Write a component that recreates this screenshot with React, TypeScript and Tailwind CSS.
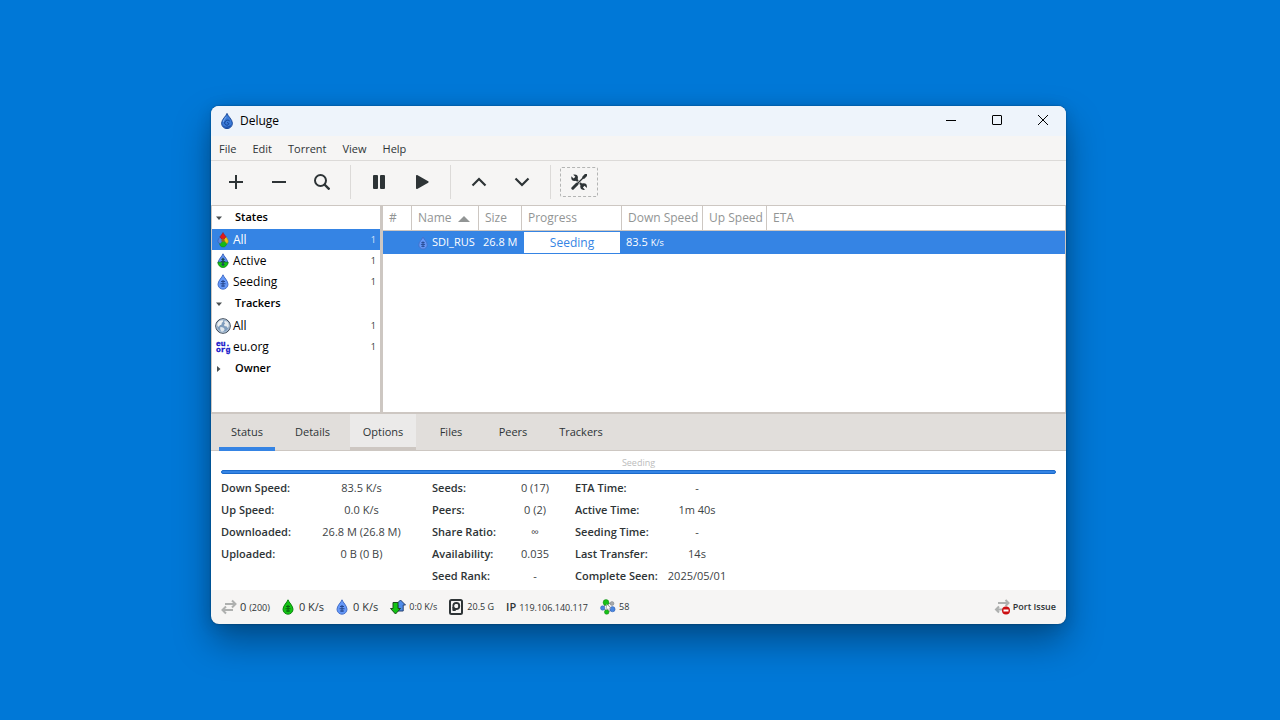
import React, { useState } from "react";

type IconProps = { className?: string };

const LogoIcon = ({ className }: IconProps) => (
  <svg viewBox="0 0 12 16" className={className} aria-hidden="true">
    <path d="M6 .4C5.300 2.900.6 6.500.6 10.200a5.400 5.400 0 0 0 10.800 0C11.400 6.500 6.700 2.900 6 .4Z" fill="#3b7bd8" stroke="#0f3f94" strokeWidth=".9" />
    <path d="M1.300 11.500c1.200 2.200 4.500 3.400 9 .3-.8 2-2.400 3.200-4.300 3.200s-3.900-1.200-4.700-3.500Z" fill="#1d4fa8" />
    <path d="M8.800 8.200C7.300 6.200 3.800 7.200 3.700 9.900c0 2.300 3 3 3.900 1.300.5-1.100-.7-2-1.600-1.300" fill="none" stroke="#123f8e" strokeWidth="1" />
    <path d="M5.300 3.800C4 5.500 2.500 7.300 2.200 9" fill="none" stroke="#8db9f5" strokeWidth=".8" />
  </svg>
);

const BlueDrop = ({ className }: IconProps) => (
  <svg viewBox="0 0 12 16" className={className} aria-hidden="true">
    <path d="M6 .8C5.300 3.300 1 6.600 1 10.200a5 5 0 0 0 10 0C11 6.600 6.700 3.300 6 .8Z" fill="#6598f8" stroke="#4670c8" strokeWidth="1" />
    <path d="M6 6v7M4 7.500h4M3.500 9.700h5M4 12h4" fill="none" stroke="#26488f" strokeWidth="1.100" />
  </svg>
);

const GreenDrop = ({ className }: IconProps) => (
  <svg viewBox="0 0 12 16" className={className} aria-hidden="true">
    <path d="M6 .8C5.300 3.300 1 6.600 1 10.200a5 5 0 0 0 10 0C11 6.600 6.700 3.300 6 .8Z" fill="#14c414" stroke="#0b850f" strokeWidth="1" />
    <path d="M6 6v7M4 7.500h4M3.500 9.700h5M4 12h4" fill="none" stroke="#0b6211" strokeWidth="1.100" />
  </svg>
);

const ActiveDrop = ({ className }: IconProps) => (
  <svg viewBox="0 0 12 16" className={className} aria-hidden="true">
    <path d="M6 .8C5.300 3.300 1 6.600 1 10.200h10C11 6.600 6.700 3.300 6 .8Z" fill="#5c8ff0" stroke="#4268bd" strokeWidth="1" />
    <path d="M.9 9.200a5.100 5.300 0 1 0 10.200 0Z" fill="#12c412" stroke="#0c8410" strokeWidth=".8" />
    <path d="M6 4.500 8 7H6.800v1h1.400v1H6.800v2H8l-2 2.300L4 11h1.200V9H3.800V8h1.400V7H4Z" fill="#1c4a55" />
  </svg>
);

const AllStatesIcon = ({ className }: IconProps) => (
  <svg viewBox="0 0 12 16" className={className} aria-hidden="true">
    <path d="M2.500 10.500 6 8l4 2.500c0 2.700-1.800 4.500-4 4.500s-3.800-2-3.500-4.500Z" fill="#15b915" stroke="#0c8410" strokeWidth=".5" />
    <path d="M.9 9c.2-1.500 1.200-3 2.200-4.200L6 8l-2.500 3.500C1.800 11.500.9 10.500.9 9Z" fill="#5a86e0" stroke="#36549d" strokeWidth=".5" />
    <path d="M8.700 4.800c1.500 1.400 2.500 3 2.500 4.400 0 1-.4 1.900-1.200 2.500L6.500 8Z" fill="#f1c40f" stroke="#9a8412" strokeWidth=".5" />
    <path d="M6 .5C5.500 1.800 4 3.300 3 4.700L4.500 7 6 8l2-2 1-1.300C8 3.300 6.500 1.800 6 .5Z" fill="#e01b1b" stroke="#a31313" strokeWidth=".5" />
    <path d="M4 8 6 6.500 8 8 6 10.500Z" fill="#8d6a1f" />
  </svg>
);

const GlobeIcon = ({ className }: IconProps) => (
  <svg viewBox="0 0 16 16" className={className} aria-hidden="true">
    <circle cx="8" cy="8" r="7.300" fill="#7f9dbd" stroke="#3c4654" strokeWidth="1" />
    <circle cx="8" cy="8" r="6.300" fill="none" stroke="#c9d8e6" strokeWidth=".8" />
    <path d="M3 4.500C4.500 2.500 7 2 8 2.500c.8.700-.3 1.600-1 2.100-.8.500.2 1.300-.5 2-.9.700-1.800.4-2.200 1.500-.2 1-1.200.8-1.600.2C2 7 2.300 5.600 3 4.500Z" fill="#f1f3f3" />
    <path d="M9.500 3.200c1.500-.4 3.200.8 4 2.600.5 1.600.3 2.900-.4 3.700-.8.700-1.300-.5-1.500-1.300-.9-.2-2.200.3-2.500-1-.2-1 .6-1.400 1.200-1.800-.8-.4-1.500-1.700-.8-2.200Z" fill="#e8ecef" />
    <path d="M5.500 9c1.600-.2 3.500.8 4 1.900.2 1.200-1.200 2.600-2.500 2.900C5.600 13.600 4.600 10.200 5.500 9Z" fill="#dfe6ec" />
  </svg>
);

const EuOrgIcon = ({ className }: IconProps) => (
  <svg viewBox="0 0 16 16" className={className} aria-hidden="true">
    <g fill="#1010c8" stroke="#1010c8" strokeWidth=".3" fontFamily="Liberation Mono, monospace" fontWeight="700" fontSize="8">
      <text x="1" y="7">eu.</text>
      <text x="1" y="13">org</text>
    </g>
  </svg>
);

const ArrowsIcon = ({ className }: IconProps) => (
  <svg viewBox="0 0 16 16" className={className} fill="none" stroke="#aeb0af" strokeWidth="2" aria-hidden="true">
    <path d="M4 5h10M11 1.500 14.500 5 11 8.500M12 11H2M5 7.500 1.500 11 5 14.500" />
  </svg>
);

const TrafficIcon = ({ className }: IconProps) => (
  <svg viewBox="0 0 16 16" className={className} strokeWidth="1" aria-hidden="true">
    <path d="M10.500 1 15.500 6h-2.300v6H7.800V6H5.500Z" fill="#4f8be8" stroke="#26406f" />
    <path d="M3 3.500h5v6h2.500L5.500 15 .5 9.500H3Z" fill="#13c413" stroke="#1a4d1c" />
  </svg>
);

const DiskIcon = ({ className }: IconProps) => (
  <svg viewBox="0 0 14 16" className={className} aria-hidden="true">
    <rect x="1" y="1" width="12" height="14" rx="1.500" fill="#f6f5f4" stroke="#2e3436" strokeWidth="2" />
    <circle cx="7.300" cy="7" r="2.900" fill="none" stroke="#2e3436" strokeWidth="2" />
    <path d="M3.900 8v3.500h2.500V9.500" fill="#2e3436" stroke="#2e3436" strokeWidth="1" />
    <circle cx="7.300" cy="7" r="1.900" fill="#f6f5f4" />
  </svg>
);

const PeersIcon = ({ className }: IconProps) => (
  <svg viewBox="0 0 16 16" className={className} aria-hidden="true">
    <path d="M6 3.500 12 5M3 9l5 4 5-3M6 4l2 9M3 9l3-5 6 6" stroke="#8a8f94" strokeWidth="1" fill="none" />
    <circle cx="6" cy="3.500" r="2.900" fill="#17c217" stroke="#118014" strokeWidth=".5" />
    <circle cx="12" cy="4.500" r="1.900" fill="#a8abad" stroke="#777b7e" strokeWidth=".5" />
    <circle cx="2.700" cy="9" r="2.200" fill="#4a86e0" stroke="#2f5fae" strokeWidth=".5" />
    <circle cx="12.500" cy="10.200" r="2.600" fill="#4a86e0" stroke="#2f5fae" strokeWidth=".5" />
    <circle cx="6.700" cy="13" r="2.300" fill="#17c217" stroke="#118014" strokeWidth=".5" />
    <path d="M6.500 5v6l1.500-1.300 1 2 1-.5-1-2h2Z" fill="#fff" stroke="#888" strokeWidth=".4" />
  </svg>
);

const PortIssueIcon = ({ className }: IconProps) => (
  <svg viewBox="0 0 16 16" className={className} aria-hidden="true">
    <path d="M4 4h10M11.500 1 14.500 4l-3 3M9 10.500H2M5 7.500l-3 3 3 3" fill="none" stroke="#aeb0af" strokeWidth="2" />
    <circle cx="12" cy="11.500" r="4" fill="#cc0f12" />
    <rect x="9.500" y="10.500" width="5" height="2" fill="#fff" />
  </svg>
);

const toolIcons = {
  add: <path d="M8 1v14M1 8h14" stroke="currentColor" strokeWidth="2" />,
  remove: <path d="M1 8h14" stroke="currentColor" strokeWidth="2" />,
  search: (
    <g fill="none" stroke="currentColor" strokeWidth="2">
      <circle cx="6.500" cy="6.500" r="5.500" />
      <path d="m10.500 10.500 5 5" strokeWidth="2.400" />
    </g>
  ),
  pause: (
    <g fill="currentColor">
      <rect x="2" y="1" width="5" height="14" rx="1" />
      <rect x="9" y="1" width="5" height="14" rx="1" />
    </g>
  ),
  play: <path d="M2 1.800v12.400c0 .7.600 1 1.200.7l11-6.200c.6-.3.600-1.100 0-1.400l-11-6.200C2.600.8 2 1.100 2 1.800Z" fill="currentColor" />,
  up: <path d="m1.500 11.500 6.500-6.500 6.500 6.500" fill="none" stroke="currentColor" strokeWidth="2.200" />,
  down: <path d="m1.500 4.500 6.500 6.500 6.500-6.500" fill="none" stroke="currentColor" strokeWidth="2.200" />,
  tools: (
    <g>
      <circle cx="3.600" cy="3.800" r="3.300" fill="currentColor" />
      <circle cx="12.600" cy="12.600" r="3.300" fill="currentColor" />
      <path d="M0 .2 3.500 3.700M12.700 12.700 16 16" stroke="#f6f5f4" strokeWidth="2.400" />
      <path d="M4.500 4.700 11.700 11.700" stroke="currentColor" strokeWidth="2.200" />
      <path d="M14 2 6 10" stroke="#f6f5f4" strokeWidth="2.600" />
      <path d="M14 2 6 10" stroke="currentColor" strokeWidth="1.200" />
      <path d="M15 1 12.800 3.200M6 10 1.800 14.200" stroke="currentColor" strokeWidth="3" strokeLinecap="round" />
    </g>
  ),
};

type Tool = { id: keyof typeof toolIcons; label: string };

const toolGroups: Tool[][] = [
  [{ id: "add", label: "Add Torrent" }, { id: "remove", label: "Remove Torrent" }, { id: "search", label: "Filter" }],
  [{ id: "pause", label: "Pause" }, { id: "play", label: "Resume" }],
  [{ id: "up", label: "Queue Up" }, { id: "down", label: "Queue Down" }],
  [{ id: "tools", label: "Preferences" }],
];

const menus = ["File", "Edit", "Torrent", "View", "Help"];

const filters = [
  {
    title: "States",
    open: true,
    items: [
      { label: "All", count: 1, icon: <AllStatesIcon className="h-4 w-3" /> },
      { label: "Active", count: 1, icon: <ActiveDrop className="h-4 w-3" /> },
      { label: "Seeding", count: 1, icon: <BlueDrop className="h-4 w-3" /> },
    ],
  },
  {
    title: "Trackers",
    open: true,
    items: [
      { label: "All", count: 1, icon: <GlobeIcon className="size-4" /> },
      { label: "eu.org", count: 1, icon: <EuOrgIcon className="size-4 overflow-visible" /> },
    ],
  },
  { title: "Owner", open: false, items: [] },
];

const columns = [
  { label: "#", width: "w-[29px]" },
  { label: "Name", width: "w-[67px]" },
  { label: "Size", width: "w-[43px]" },
  { label: "Progress", width: "w-[100px]" },
  { label: "Down Speed", width: "w-[81px]" },
  { label: "Up Speed", width: "w-[64px]" },
  { label: "ETA", width: "" },
];

const tabs = [
  { label: "Status", width: "w-14" },
  { label: "Details", width: "w-[59px]" },
  { label: "Options", width: "w-[66px]" },
  { label: "Files", width: "w-[54px]" },
  { label: "Peers", width: "w-[54px]" },
  { label: "Trackers", width: "w-[66px]" },
];

const details = [
  {
    grid: "grid-cols-[90px_101px]",
    rows: [["Down Speed:", "83.5 K/s"], ["Up Speed:", "0.0 K/s"], ["Downloaded:", "26.8 M (26.8 M)"], ["Uploaded:", "0 B (0 B)"]],
  },
  {
    grid: "grid-cols-[83px_40px]",
    rows: [["Seeds:", "0 (17)"], ["Peers:", "0 (2)"], ["Share Ratio:", "∞"], ["Availability:", "0.035"], ["Seed Rank:", "-"]],
  },
  {
    grid: "grid-cols-[93px_58px]",
    rows: [["ETA Time:", "-"], ["Active Time:", "1m 40s"], ["Seeding Time:", "-"], ["Last Transfer:", "14s"], ["Complete Seen:", "2025/05/01"]],
  },
];

const TitleBar = () => (
  <header className="flex h-[30px] items-center bg-[#eef4fb] pl-2.5 text-xs text-black">
    <LogoIcon className="h-4 w-3" />
    <h1 className="ml-[7px] flex-1">Deluge</h1>
    <button aria-label="Minimize" className="flex h-full w-[46px] items-center justify-center pb-0.5">
      <svg viewBox="0 0 10 10" className="size-2.5" stroke="currentColor"><path d="M0 5.500h10" /></svg>
    </button>
    <button aria-label="Maximize" className="flex h-full w-[46px] items-center justify-center pb-0.5">
      <svg viewBox="0 0 10 10" className="size-2.5" fill="none" stroke="currentColor"><rect x=".5" y=".5" width="9" height="9" rx=".5" /></svg>
    </button>
    <button aria-label="Close" className="flex h-full w-[46px] items-center justify-center pb-0.5">
      <svg viewBox="0 0 10 10" className="size-2.5" stroke="currentColor"><path d="m0 0 10 10M10 0 0 10" /></svg>
    </button>
  </header>
);

const Toolbar = () => (
  <div className="flex h-[45px] items-center gap-[5px] border-b border-[#cdc7c2] pb-[3px] pl-1.5">
    {toolGroups.map((group, i) => (
      <React.Fragment key={i}>
        {i > 0 && <div className="mx-1 h-[34px] w-px bg-[#dcdad8]" />}
        {group.map(tool => (
          <button
            key={tool.id}
            aria-label={tool.label}
            className={`flex h-[30px] w-[38px] items-center justify-center rounded-xs ${
              tool.id === "tools" ? "border border-dashed border-[#b4b5b4]" : ""
            }`}
          >
            <svg viewBox="0 0 16 16" className="size-4">{toolIcons[tool.id]}</svg>
          </button>
        ))}
      </React.Fragment>
    ))}
  </div>
);

const Sidebar = () => {
  const [selected, setSelected] = useState("States/All");
  return (
    <nav className="w-[172px] shrink-0 border-r-3 border-l border-[#cdc7c2] bg-white text-xs text-black">
      {filters.map(group => (
        <div key={group.title}>
          <button className="flex h-[23px] w-full items-center pl-1 text-[11px] font-semibold">
            <svg viewBox="0 0 6 6" className="size-1.5" fill="#4a4f51">
              <path d={group.open ? "M0 1.500h6L3 5Z" : "M1 0v6l3.500-3Z"} />
            </svg>
            <span className="ml-[13px]">{group.title}</span>
          </button>
          {group.items.map(item => {
            const id = `${group.title}/${item.label}`;
            return (
              <button
                key={id}
                onClick={() => setSelected(id)}
                className={`flex h-[21px] w-full items-center pr-1 pl-[3px] ${
                  selected === id ? "bg-[#3584e4] text-white" : ""
                }`}
              >
                <span className="flex w-4 justify-center">{item.icon}</span>
                <span className="ml-0.5 flex-1 text-left">{item.label}</span>
                <span className="text-[9px] opacity-80">{item.count}</span>
              </button>
            );
          })}
        </div>
      ))}
    </nav>
  );
};

const TorrentList = () => (
  <div className="min-w-0 flex-1 overflow-hidden border-r border-[#cdc7c2] bg-white">
    <table className="w-full table-fixed border-separate border-spacing-0 whitespace-nowrap">
      <thead>
        <tr className="h-[25px] text-left text-xs text-[#929595]">
          {columns.map(col => (
            <th
              key={col.label}
              className={`border-b border-[#cdc7c2] p-0 pl-1.5 font-normal not-last:border-r ${col.width}`}
            >
              {col.label}
              {col.label === "Name" && (
                <svg viewBox="0 0 12 6" className="ml-1.5 inline h-1.5 w-3" fill="#929595"><path d="M6 0 12 6H0Z" /></svg>
              )}
            </th>
          ))}
        </tr>
      </thead>
      <tbody>
        <tr className="h-[23px] bg-[#3584e4] text-white">
          <td className="p-0" />
          <td className="p-0 pl-1.5">
            <div className="flex items-center gap-1">
              <BlueDrop className="h-3.5 w-2.5" />
              SDI_RUS
            </div>
          </td>
          <td className="p-0 pl-1">26.8 M</td>
          <td className="px-0.5 py-px">
            <div className="h-[21px] bg-white text-center text-xs leading-[21px] text-[#3584e4]">Seeding</div>
          </td>
          <td className="p-0 pl-1">83.5 <span className="text-[9px]">K/s</span></td>
          <td className="p-0" />
          <td className="p-0" />
        </tr>
      </tbody>
    </table>
  </div>
);

const DetailTabs = () => {
  const [active, setActive] = useState("Status");
  return (
    <div role="tablist" className="flex h-[39px] gap-2 border-t-2 border-b border-[#cdc7c2] bg-[#e1dedb] px-2">
      {tabs.map(tab => (
        <button
          key={tab.label}
          role="tab"
          aria-selected={active === tab.label}
          onClick={() => setActive(tab.label)}
          className={`-mb-px border-b-4 pt-1 ${tab.width} ${
            active === tab.label ? "border-[#3584e4]" : tab.label === "Options" ? "border-[#cdc7c2]" : "border-transparent"
          } ${tab.label === "Options" ? "bg-[#ebeae9]" : ""}`}
        >
          {tab.label}
        </button>
      ))}
    </div>
  );
};

const StatusPanel = () => (
  <section className="h-[139px] bg-white px-2.5 pt-[5px]">
    <p className="text-center text-[9px] leading-[14px] text-[#bcbcbc]">Seeding</p>
    <div
      role="progressbar"
      aria-label="Seeding"
      aria-valuenow={100}
      className="h-1 rounded-xs border border-[#1b6acb] bg-[#3584e4]"
    />
    <div className="flex gap-5 pt-[3px]">
      {details.map(group => (
        <dl key={group.grid} className={`grid auto-rows-[22px] items-center whitespace-nowrap ${group.grid}`}>
          {group.rows.map(([label, value]) => (
            <React.Fragment key={label}>
              <dt className="font-semibold">{label}</dt>
              <dd className="flex justify-center text-[#3d4345]">{value}</dd>
            </React.Fragment>
          ))}
        </dl>
      ))}
    </div>
  </section>
);

const StatusBar = () => (
  <footer className="flex h-[34px] items-center gap-3 px-2.5 whitespace-nowrap">
    <button className="flex items-center gap-[3px]">
      <ArrowsIcon className="size-4" />
      <span>0 <span className="text-[9px]">(200)</span></span>
    </button>
    <button className="flex items-center gap-[5px]">
      <GreenDrop className="h-4 w-3" />
      0 K/s
    </button>
    <button className="flex items-center gap-[5px]">
      <BlueDrop className="h-4 w-3" />
      0 K/s
    </button>
    <button className="flex items-center gap-[3px] text-[9px]">
      <TrafficIcon className="size-4" />
      0:0 K/s
    </button>
    <button className="flex items-center gap-1 text-[9px]">
      <DiskIcon className="h-4 w-3.5" />
      20.5 G
    </button>
    <button className="flex items-baseline gap-[3px] text-[9px]">
      <span className="text-[11px] font-semibold">IP</span>
      119.106.140.117
    </button>
    <button className="flex items-center gap-[3px] text-[9px]">
      <PeersIcon className="size-4" />
      58
    </button>
    <button className="ml-auto flex items-center gap-[3px] text-[9px] font-semibold">
      <PortIssueIcon className="size-4" />
      Port Issue
    </button>
  </footer>
);

const App: React.FC = () => (
  <main className="flex min-h-screen items-center justify-center bg-[#0078d7] pt-2.5 pr-[3px] font-['Open_Sans','Noto_Sans',sans-serif] text-[11px] text-[#2e3436]">
    <div className="w-full max-w-[855px] overflow-hidden rounded-lg bg-[#f6f5f4] shadow-[0_0_2px_rgba(0,0,0,0.4),0_2px_16px_rgba(0,0,0,0.12),0_18px_36px_rgba(0,0,0,0.35)]">
      <TitleBar />
      <div role="menubar" className="flex h-[25px] items-center gap-4 border-b border-[#dcdad8] px-2 pt-0.5">
        {menus.map(menu => (
          <button key={menu} role="menuitem">{menu}</button>
        ))}
      </div>
      <Toolbar />
      <div className="flex min-h-[206px]">
        <Sidebar />
        <TorrentList />
      </div>
      <DetailTabs />
      <StatusPanel />
      <StatusBar />
    </div>
  </main>
);

export default App;
